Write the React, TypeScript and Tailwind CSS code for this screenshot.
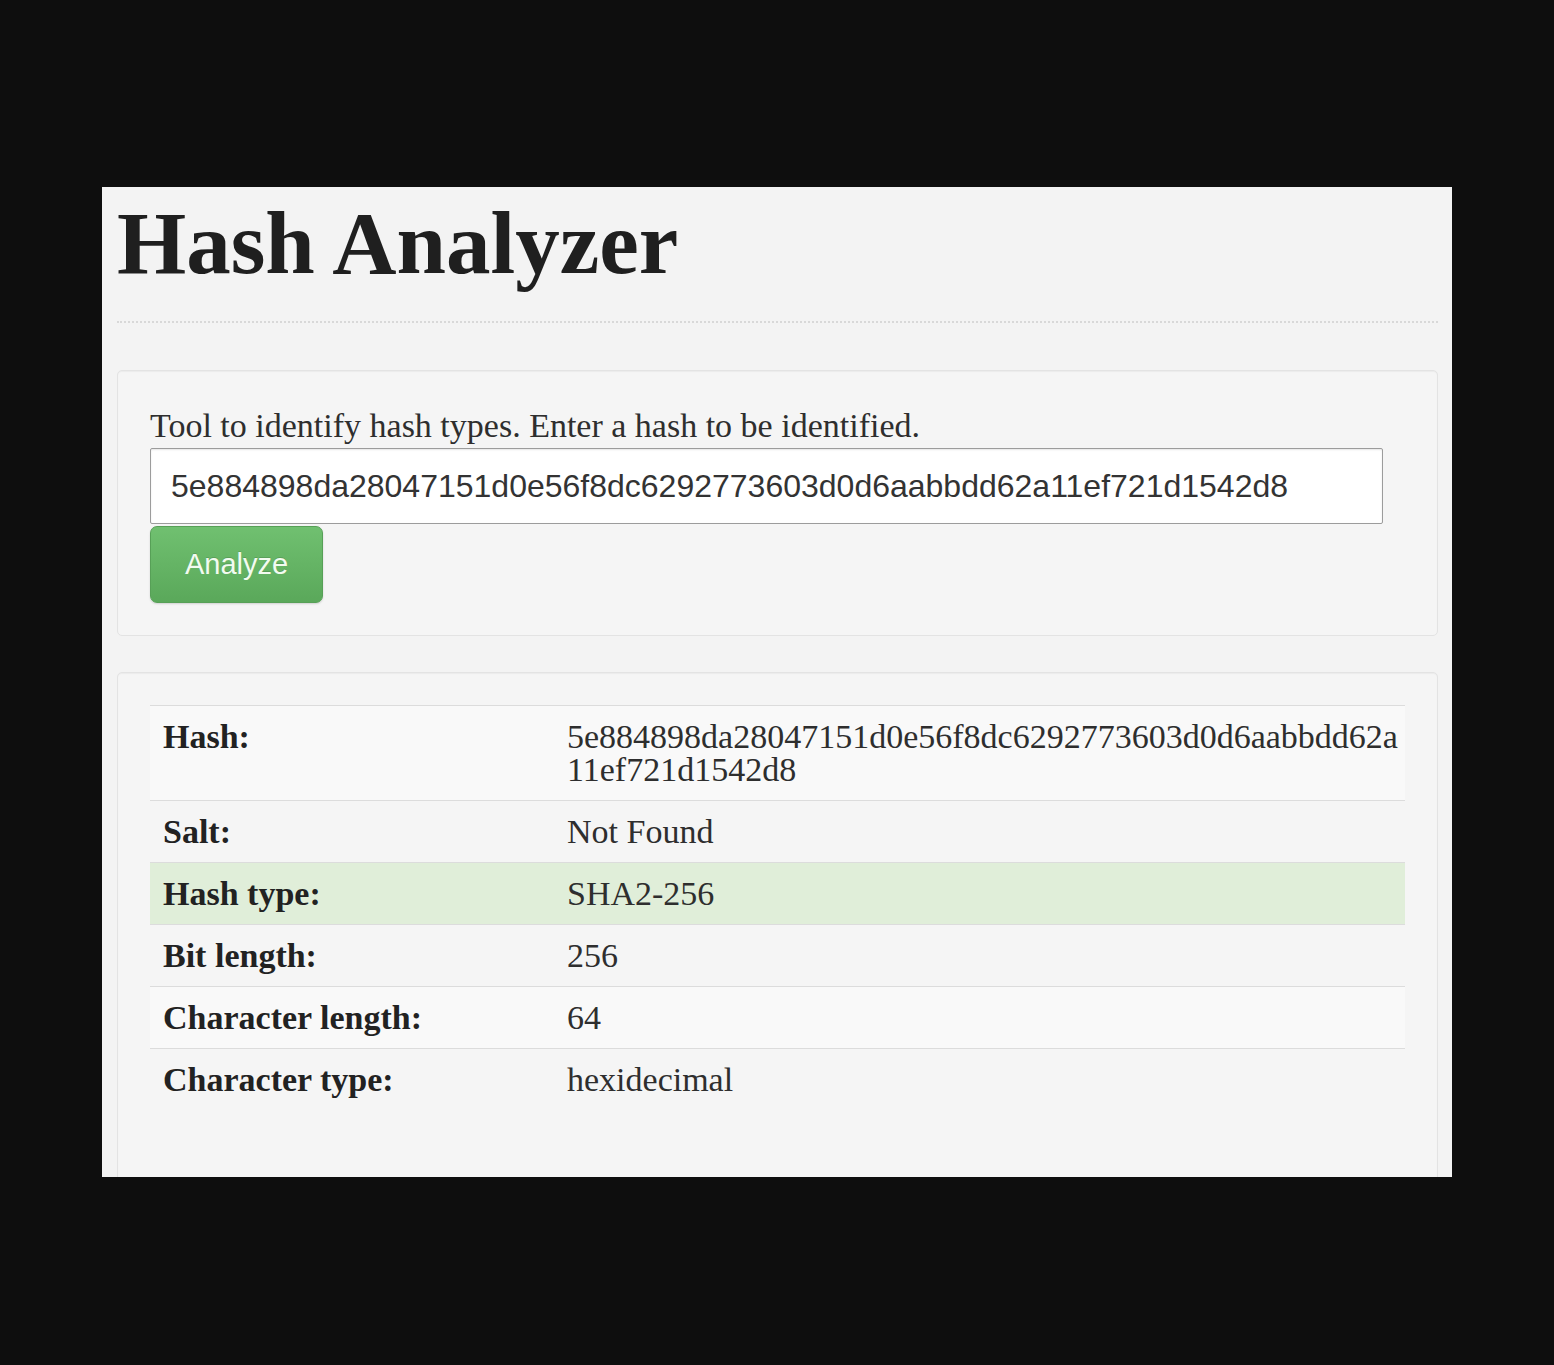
const rows = [
  { label: "Hash:", value: "5e884898da28047151d0e56f8dc6292773603d0d6aabbdd62a11ef721d1542d8", tone: "striped" },
  { label: "Salt:", value: "Not Found", tone: "plain" },
  { label: "Hash type:", value: "SHA2-256", tone: "success" },
  { label: "Bit length:", value: "256", tone: "plain" },
  { label: "Character length:", value: "64", tone: "striped" },
  { label: "Character type:", value: "hexidecimal", tone: "plain" },
];

const toneClass: Record<string, string> = {
  striped: "bg-[#f9f9f9]",
  plain: "bg-transparent",
  success: "bg-[#e0eed9]",
};

export default function App() {
  return (
    <div className="min-h-[1365px] bg-[#0e0e0e] pt-[187px] font-['Liberation_Serif',serif] text-[#2b2b2b]">
      <div className="mx-auto h-[990px] w-[1350px] overflow-hidden bg-[#f3f3f3] pl-[15px] pr-[14px] pt-[12px]">
        <h1 className="text-[89px] font-bold leading-[88px] text-[#1f1f1f]">Hash Analyzer</h1>
        <div className="mt-[34px] border-t-2 border-dotted border-[#d8d8d8]" />

        <div className="mt-[47px] rounded-[5px] border border-[#e3e3e3] bg-[#f5f5f5] px-[32px] pt-[32px] pb-[32px] shadow-[inset_0_1px_1px_rgba(0,0,0,0.04)]">
          <label className="block text-[34px] leading-[45px] text-[#2e2e2e]">
            Tool to identify hash types. Enter a hash to be identified.
          </label>
          <input
            readOnly
            value="5e884898da28047151d0e56f8dc6292773603d0d6aabbdd62a11ef721d1542d8"
            className="block h-[76px] w-[1233px] rounded-[2px] border border-[#9c9c9c] bg-white px-[20px] font-['Liberation_Sans',sans-serif] text-[32px] text-[#333] shadow-[inset_0_1px_2px_rgba(0,0,0,0.1)] outline-none"
          />
          <button className="mt-[2px] h-[77px] w-[173px] rounded-[7px] border border-[#57a057] bg-gradient-to-b from-[#70c070] to-[#5aa85a] font-['Liberation_Sans',sans-serif] text-[29px] text-[#f2fbf0] shadow-[0_1px_2px_rgba(0,0,0,0.15)] [text-shadow:0_-1px_0_rgba(0,0,0,0.15)]">
            Analyze
          </button>
        </div>

        <div className="mt-[36px] h-[600px] rounded-[5px] border border-[#e3e3e3] bg-[#f5f5f5] px-[32px] pt-[32px] shadow-[inset_0_1px_1px_rgba(0,0,0,0.04)]">
          <table className="w-[1255px] table-fixed border-collapse text-[34px] leading-[33px]">
            <colgroup>
              <col className="w-[404px]" />
              <col />
            </colgroup>
            <tbody>
              {rows.map((r) => (
                <tr key={r.label} className={`border-t border-[#dcdcdc] ${toneClass[r.tone]}`}>
                  <td className="py-[14px] pl-[13px] pr-[13px] align-top font-bold text-[#222]">{r.label}</td>
                  <td className="break-all py-[14px] pl-[13px] pr-[4px] align-top text-[#2e2e2e]">{r.value}</td>
                </tr>
              ))}
            </tbody>
          </table>
        </div>
      </div>
    </div>
  );
}
